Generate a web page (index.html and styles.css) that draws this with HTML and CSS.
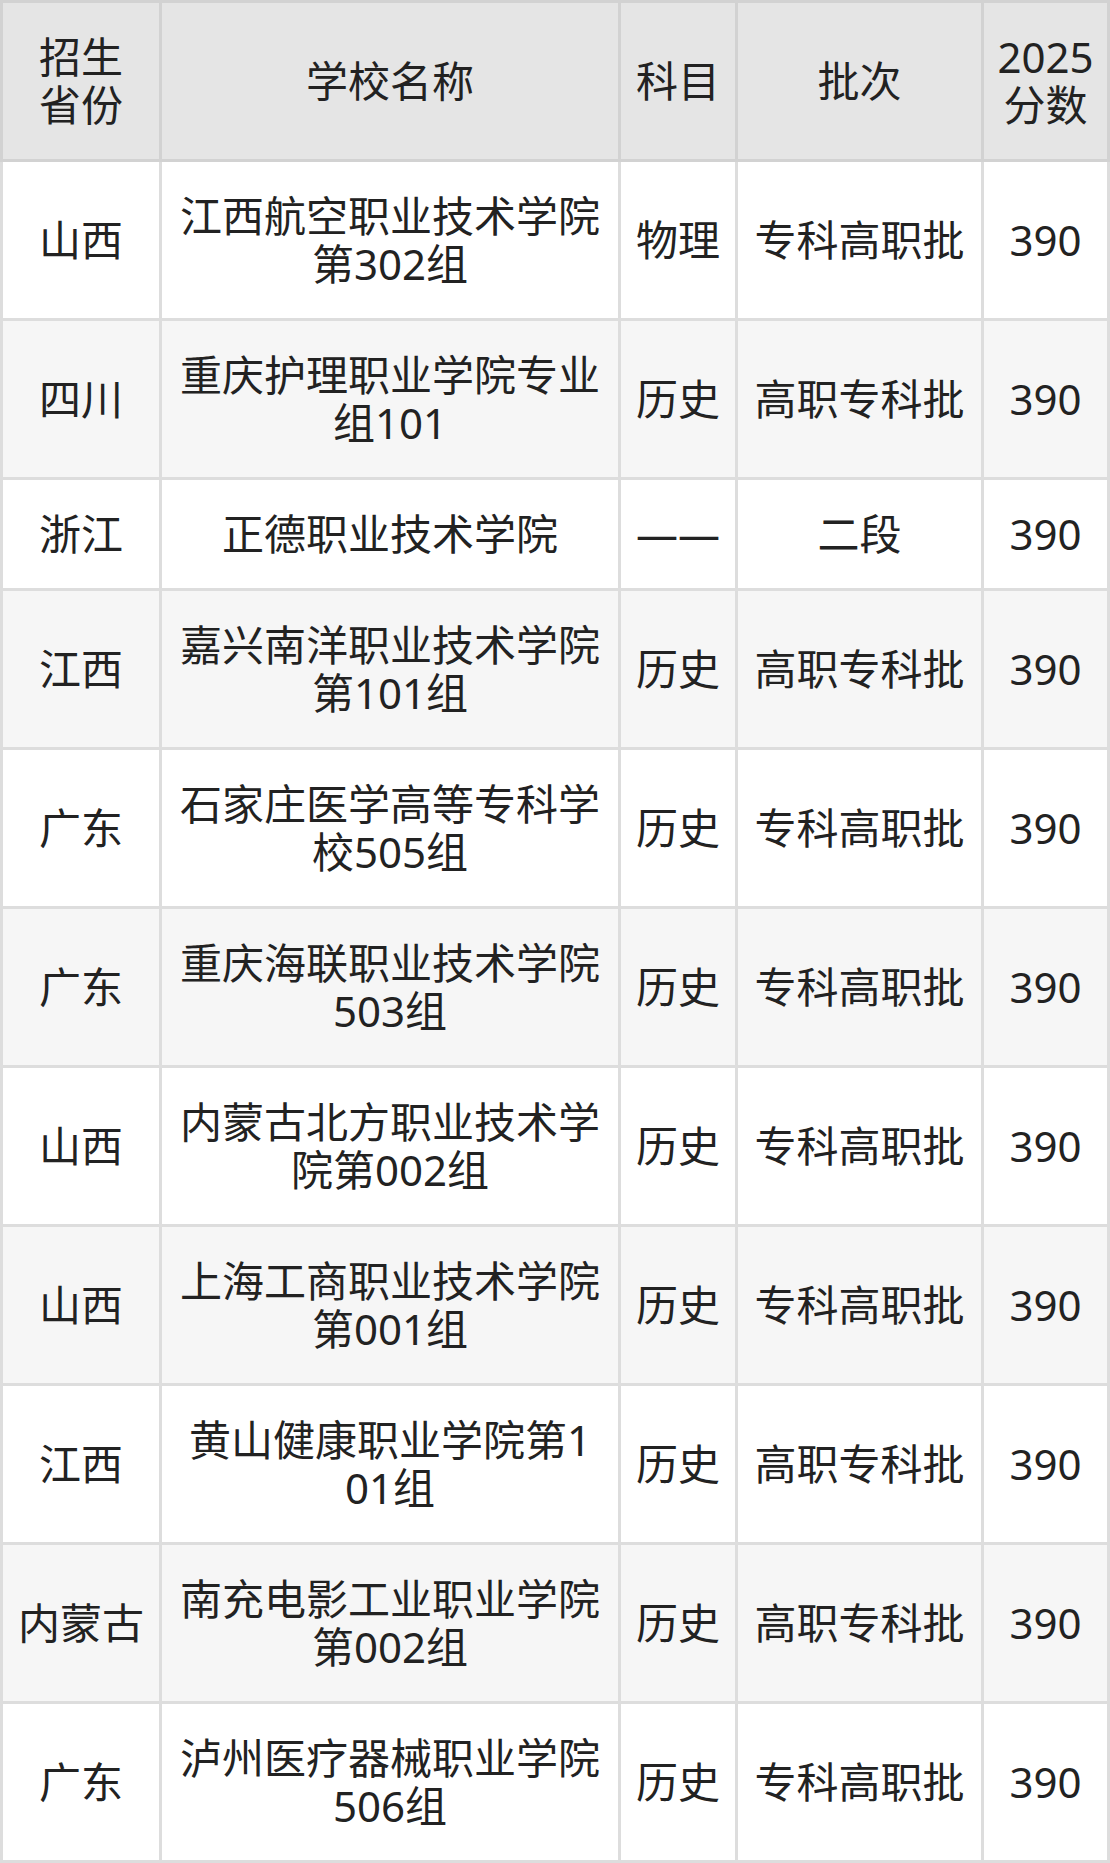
FILE: index.html
```html
<!DOCTYPE html>
<html lang="zh-CN">
<head>
<meta charset="utf-8">
<title>2025 分数</title>
<link rel="stylesheet" href="styles.css">
</head>
<body>
<table class="score-table">
  <colgroup>
    <col class="c-prov">
    <col class="c-school">
    <col class="c-subject">
    <col class="c-batch">
    <col class="c-score">
  </colgroup>
  <thead>
    <tr>
      <th>招生<br>省份</th>
      <th>学校名称</th>
      <th>科目</th>
      <th>批次</th>
      <th class="score">2025分数</th>
    </tr>
  </thead>
  <tbody>
    <tr><td>山西</td><td class="school">江西航空职业技术学院第302组</td><td>物理</td><td>专科高职批</td><td>390</td></tr>
    <tr><td>四川</td><td class="school">重庆护理职业学院专业组101</td><td>历史</td><td>高职专科批</td><td>390</td></tr>
    <tr><td>浙江</td><td class="school">正德职业技术学院</td><td>——</td><td>二段</td><td>390</td></tr>
    <tr><td>江西</td><td class="school">嘉兴南洋职业技术学院第101组</td><td>历史</td><td>高职专科批</td><td>390</td></tr>
    <tr><td>广东</td><td class="school">石家庄医学高等专科学校505组</td><td>历史</td><td>专科高职批</td><td>390</td></tr>
    <tr><td>广东</td><td class="school">重庆海联职业技术学院503组</td><td>历史</td><td>专科高职批</td><td>390</td></tr>
    <tr><td>山西</td><td class="school">内蒙古北方职业技术学院第002组</td><td>历史</td><td>专科高职批</td><td>390</td></tr>
    <tr><td>山西</td><td class="school">上海工商职业技术学院第001组</td><td>历史</td><td>专科高职批</td><td>390</td></tr>
    <tr><td>江西</td><td class="school">黄山健康职业学院第101组</td><td>历史</td><td>高职专科批</td><td>390</td></tr>
    <tr><td>内蒙古</td><td class="school">南充电影工业职业学院第002组</td><td>历史</td><td>高职专科批</td><td>390</td></tr>
    <tr><td>广东</td><td class="school">泸州医疗器械职业学院506组</td><td>历史</td><td>专科高职批</td><td>390</td></tr>
  </tbody>
</table>
</body>
</html>
```

FILE: styles.css
```css
html, body {
  margin: 0;
  padding: 0;
  background: #ffffff;
}

.score-table {
  width: 1110px;
  table-layout: fixed;
  border-collapse: collapse;
  font-family: "Noto Sans", "Noto Sans CJK SC", sans-serif;
  font-size: 42px;
  line-height: 48px;
  color: #222222;
}

.c-prov { width: 159px; }
.c-school { width: 459px; }
.c-subject { width: 117px; }
.c-batch { width: 246px; }
.c-score { width: 126px; }

.score-table th,
.score-table td {
  padding: 30px 0;
  text-align: center;
  vertical-align: middle;
  word-break: break-all;
  font-weight: normal;
}

.score-table th {
  background: #e5e5e5;
  border: 3px solid #d2d2d2;
}

.score-table td {
  border: 3px solid #dddddd;
}

.score-table th.score {
  padding: 30px 10px;
}

.score-table td.school {
  padding: 30px 17px;
}

.score-table tbody tr:nth-child(even) td {
  background: #f6f6f6;
}
```
